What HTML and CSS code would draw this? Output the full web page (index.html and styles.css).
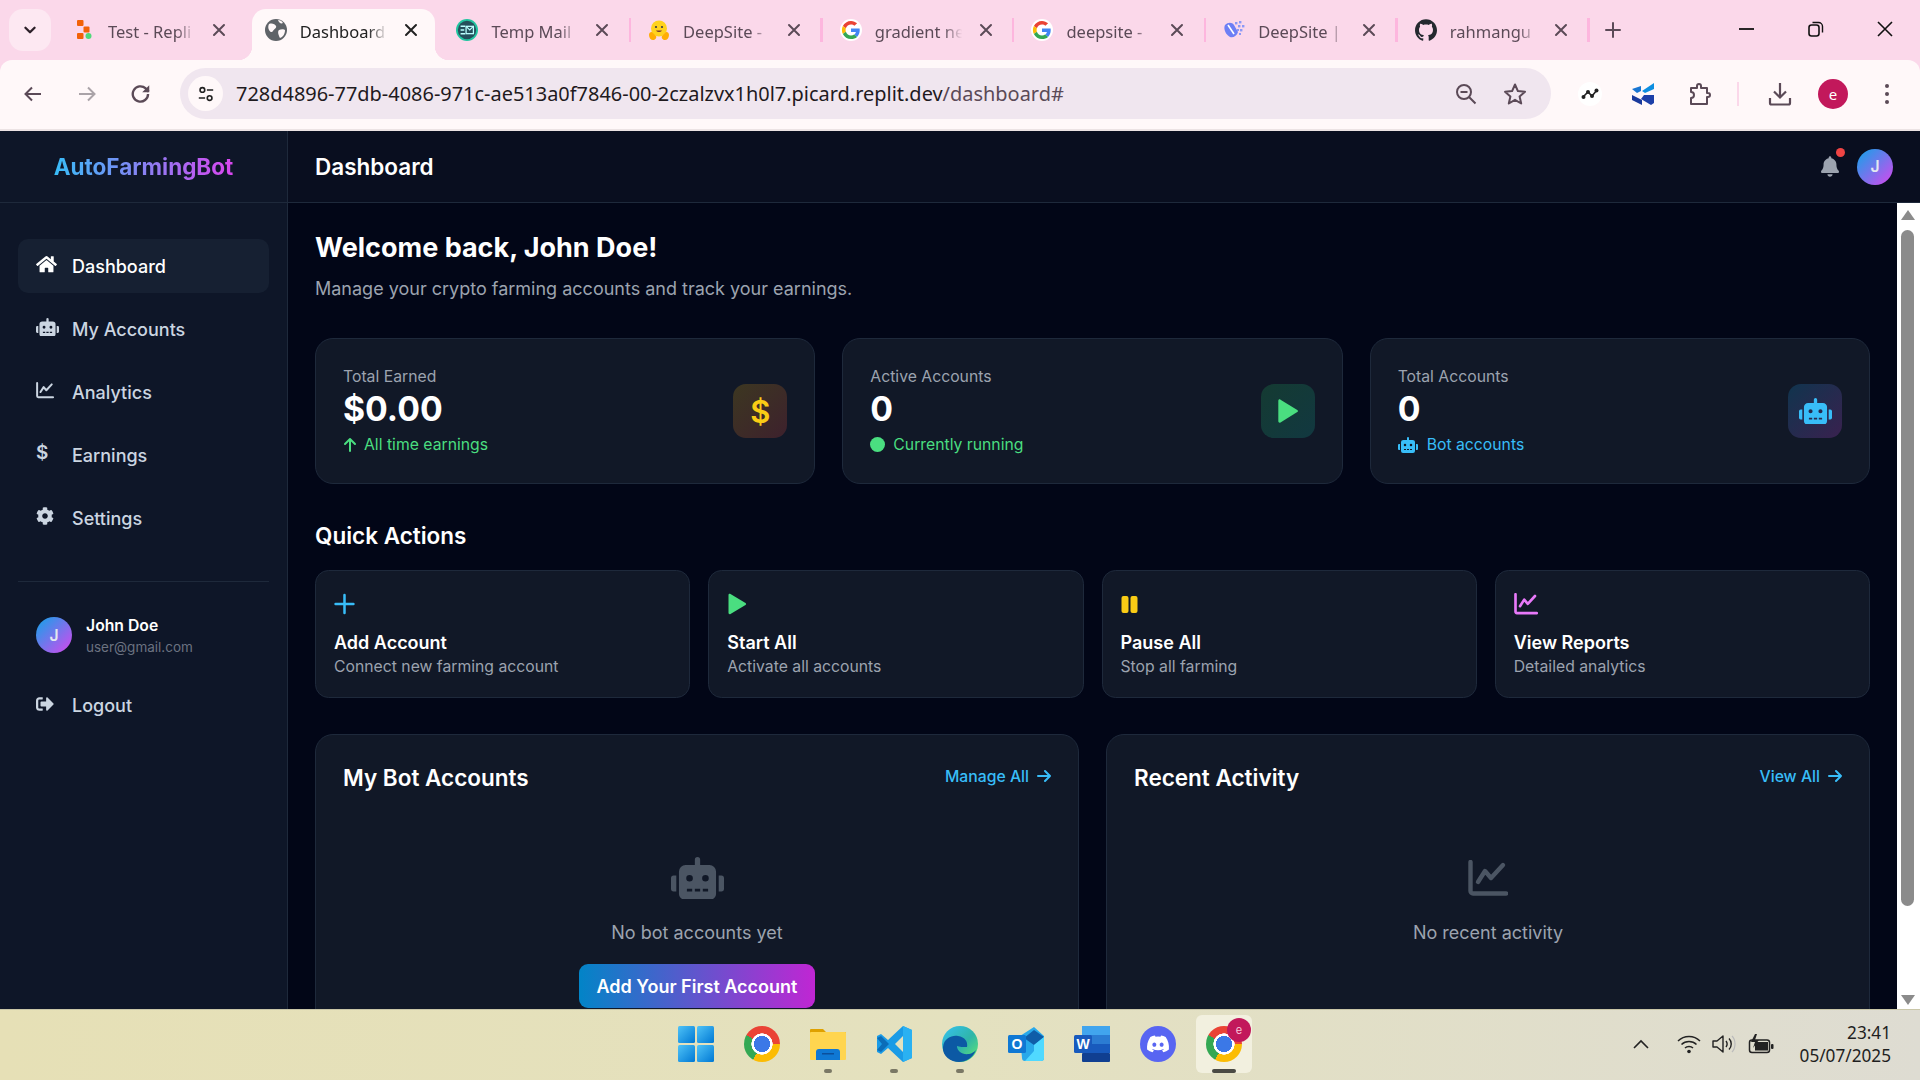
FILE: index.html
```html
<!DOCTYPE html>
<html lang="en">
<head>
  <meta charset="UTF-8">
  <meta name="viewport" content="width=device-width, initial-scale=1.0">
  <title>Dashboard</title>
  <link rel="stylesheet" href="styles.css">
</head>
<body>
  <svg class="defs">
    <defs>
      <path id="i-home" d="M280.37 148.26L96 300.11V464a16 16 0 0 0 16 16l112.06-.29a16 16 0 0 0 15.92-16V368a16 16 0 0 1 16-16h64a16 16 0 0 1 16 16v95.64a16 16 0 0 0 16 16.05L464 480a16 16 0 0 0 16-16V300L295.67 148.26a12.19 12.19 0 0 0-15.3 0zM571.6 251.47L488 182.56V44.05a12 12 0 0 0-12-12h-56a12 12 0 0 0-12 12v72.61L318.47 43a48 48 0 0 0-61 0L4.34 251.47a12 12 0 0 0-1.6 16.9l25.5 31A12 12 0 0 0 45.15 301l235.22-193.74a12.19 12.19 0 0 1 15.3 0L530.9 301a12 12 0 0 0 16.9-1.6l25.5-31a12 12 0 0 0-1.7-16.93z"/>
      <path id="i-robot" d="M32,224H64V416H32A31.96166,31.96166,0,0,1,0,384V256A31.96166,31.96166,0,0,1,32,224Zm512-48V448a64.06328,64.06328,0,0,1-64,64H160a64.06328,64.06328,0,0,1-64-64V176a79.974,79.974,0,0,1,80-80H288V32a32,32,0,0,1,64,0V96H464A79.974,79.974,0,0,1,544,176ZM264,256a40,40,0,1,0-40,40A39.997,39.997,0,0,0,264,256Zm-8,128H192v32h64Zm96,0H288v32h64ZM456,256a40,40,0,1,0-40,40A39.997,39.997,0,0,0,456,256Zm-8,128H384v32h64ZM640,256V384a31.96166,31.96166,0,0,1-32,32H576V224h32A31.96166,31.96166,0,0,1,640,256Z"/>
      <g id="i-chart" fill="none" stroke="currentColor" stroke-width="4.4" stroke-linecap="round" stroke-linejoin="round">
        <path d="M2.5 2v29a2.5 2.5 0 0 0 2.5 2.5h33"/>
        <path d="M10 22l7-11 6 7 12-13"/>
      </g>
      <path id="i-cog" d="M487.4 315.7l-42.6-24.6c4.3-23.2 4.3-47 0-70.2l42.6-24.6c4.9-2.8 7.1-8.6 5.5-14-11.1-35.6-30-67.8-54.7-94.6-3.8-4.1-10-5.1-14.8-2.3L380.8 110c-17.9-15.4-38.5-27.3-60.8-35.1V25.8c0-5.6-3.9-10.5-9.4-11.7-36.7-8.2-74.3-7.8-109.2 0-5.5 1.2-9.4 6.1-9.4 11.7V75c-22.2 7.9-42.8 19.8-60.8 35.1L88.7 85.5c-4.9-2.8-11-1.9-14.8 2.3-24.7 26.7-43.6 58.9-54.7 94.6-1.7 5.4.6 11.2 5.5 14L67.3 221c-4.3 23.2-4.3 47 0 70.2l-42.6 24.6c-4.9 2.8-7.1 8.6-5.5 14 11.1 35.6 30 67.8 54.7 94.6 3.8 4.1 10 5.1 14.8 2.3l42.6-24.6c17.9 15.4 38.5 27.3 60.8 35.1v49.2c0 5.6 3.9 10.5 9.4 11.7 36.7 8.2 74.3 7.8 109.2 0 5.5-1.2 9.4-6.1 9.4-11.7v-49.2c22.2-7.9 42.8-19.8 60.8-35.1l42.6 24.6c4.9 2.8 11 1.9 14.8-2.3 24.7-26.7 43.6-58.9 54.7-94.6 1.5-5.5-.7-11.3-5.6-14.1zM256 336c-44.1 0-80-35.9-80-80s35.9-80 80-80 80 35.9 80 80-35.9 80-80 80z"/>
      <path id="i-logout" d="M497 273L329 441c-15 15-41 4.5-41-17v-96H152c-13.3 0-24-10.7-24-24v-96c0-13.3 10.7-24 24-24h136V88c0-21.4 25.9-32 41-17l168 168c9.3 9.4 9.3 24.6 0 34zM192 436v-40c0-6.6-5.4-12-12-12H96c-17.7 0-32-14.3-32-32V160c0-17.7 14.3-32 32-32h84c6.6 0 12-5.4 12-12V76c0-6.6-5.4-12-12-12H96c-53 0-96 43-96 96v192c0 53 43 96 96 96h84c6.6 0 12-5.4 12-12z"/>
      <path id="i-bell" d="M224 512c35.32 0 63.97-28.65 63.97-64H160.03c0 35.35 28.65 64 63.97 64zm215.39-149.71c-19.32-20.76-55.47-51.99-55.47-154.29 0-77.7-54.48-139.9-127.94-155.16V32c0-17.67-14.32-32-31.98-32s-31.98 14.33-31.98 32v20.84C118.56 68.1 64.08 130.3 64.08 208c0 102.3-36.15 133.53-55.47 154.29-6 6.45-8.66 14.16-8.61 21.71.11 16.4 12.98 32 32.1 32h383.8c19.12 0 32-15.6 32.1-32 .05-7.55-2.61-15.27-8.61-21.71z"/>
      <path id="i-arrow" d="M2 8h12M9 3l5 5-5 5" fill="none" stroke="currentColor" stroke-width="2" stroke-linecap="round" stroke-linejoin="round"/>
      <path id="i-close" d="M2 2l10 10M12 2L2 12" fill="none" stroke="currentColor" stroke-width="2" stroke-linecap="round"/>
      <g id="i-google">
        <circle cx="24" cy="24" r="29" fill="#fff"/>
        <path fill="#EA4335" d="M24 9.5c3.54 0 6.71 1.22 9.21 3.6l6.85-6.85C35.9 2.38 30.47 0 24 0 14.62 0 6.51 5.38 2.56 13.22l7.98 6.19C12.43 13.72 17.74 9.5 24 9.5z"/>
        <path fill="#4285F4" d="M46.98 24.55c0-1.57-.15-3.09-.38-4.55H24v9.02h12.94c-.58 2.96-2.26 5.48-4.78 7.18l7.73 6c4.51-4.18 7.09-10.36 7.09-17.65z"/>
        <path fill="#FBBC05" d="M10.53 28.59c-.48-1.45-.76-2.99-.76-4.59s.27-3.14.76-4.59l-7.98-6.19C.92 16.46 0 20.12 0 24c0 3.88.92 7.54 2.56 10.78l7.97-6.19z"/>
        <path fill="#34A853" d="M24 48c6.48 0 11.93-2.13 15.89-5.81l-7.73-6c-2.15 1.45-4.92 2.3-8.16 2.3-6.26 0-11.57-4.22-13.47-9.91l-7.98 6.19C6.51 42.62 14.62 48 24 48z"/>
      </g>
      <linearGradient id="win-grad" x1="0" y1="0" x2="1" y2="1">
        <stop offset="0" stop-color="#4fc3f7"/>
        <stop offset="1" stop-color="#0078d4"/>
      </linearGradient>
      <linearGradient id="edge-grad" x1="0" y1="0" x2="1" y2="1">
        <stop offset="0" stop-color="#35c1f1"/>
        <stop offset="0.55" stop-color="#2fb5a8"/>
        <stop offset="1" stop-color="#66eb6e"/>
      </linearGradient>
    </defs>
  </svg>

  <!-- browser chrome -->
  <div class="tabstrip">
    <button class="tab-list">
      <svg viewBox="0 0 14 14" class="chev"><path d="M3 5l4 4 4-4" fill="none" stroke="currentColor" stroke-width="2" stroke-linecap="round" stroke-linejoin="round"/></svg>
    </button>
    <div class="tabs">
      <div class="tab no-sep">
        <svg class="favicon" viewBox="0 0 22 22">
          <rect x="4" y="1" width="6.5" height="6" rx="1" fill="#f26207"/>
          <rect x="10.5" y="7.5" width="6" height="6" rx="1" fill="#f26207"/>
          <rect x="4" y="14" width="6.5" height="6" rx="1" fill="#f26207"/>
          <circle cx="15.5" cy="17" r="3" fill="#4fd97a"/>
        </svg>
        <span class="tab-title">Test - Repli</span>
        <svg class="tab-close" viewBox="0 0 14 14"><use href="#i-close"/></svg>
      </div>
      <div class="tab active">
        <svg class="favicon" viewBox="0 0 22 22">
          <circle cx="11" cy="11" r="11" fill="#5f6368"/>
          <path d="M4 5c3-1 6 0 7 2s-2 3-3 5-3 1-4-1-1-4 0-6zM14 11c2-1 5-1 6 0 0 4-2 7-5 8-1-2-3-6-1-8zM13 1c2 0 4 1 5 3-2 1-4 0-5-3z" fill="#fff8f9"/>
        </svg>
        <span class="tab-title">Dashboard</span>
        <svg class="tab-close" viewBox="0 0 14 14"><use href="#i-close"/></svg>
      </div>
      <div class="tab">
        <svg class="favicon" viewBox="0 0 24 24">
          <circle cx="12" cy="12" r="12" fill="#20c5a0"/>
          <circle cx="12" cy="12" r="10" fill="#24505c"/>
          <path d="M5 8h5M5 12h4M5 16h5" stroke="#bff" stroke-width="1.6"/>
          <rect x="11" y="8" width="8" height="8" fill="none" stroke="#bff" stroke-width="1.4"/>
          <path d="M11 8l4 4 4-4" fill="none" stroke="#bff" stroke-width="1.2"/>
        </svg>
        <span class="tab-title">Temp Mail</span>
        <svg class="tab-close" viewBox="0 0 14 14"><use href="#i-close"/></svg>
      </div>
      <div class="tab">
        <svg class="favicon" viewBox="0 0 22 22">
          <circle cx="11" cy="9.5" r="8" fill="#ffd21e"/>
          <circle cx="8" cy="8" r="1.1" fill="#3a3b45"/>
          <circle cx="14" cy="8" r="1.1" fill="#3a3b45"/>
          <path d="M8 11.5c1.5 2 4.5 2 6 0z" fill="#7a3b2e"/>
          <path d="M1 16c0-3 3-4 4-2l3 3c1 2-1 4-3 4s-4-2-4-5zM21 16c0-3-3-4-4-2l-3 3c-1 2 1 4 3 4s4-2 4-5z" fill="#ffad03"/>
        </svg>
        <span class="tab-title">DeepSite -</span>
        <svg class="tab-close" viewBox="0 0 14 14"><use href="#i-close"/></svg>
      </div>
      <div class="tab">
        <svg class="favicon" viewBox="-5 -5 58 58"><use href="#i-google"/></svg>
        <span class="tab-title">gradient ne</span>
        <svg class="tab-close" viewBox="0 0 14 14"><use href="#i-close"/></svg>
      </div>
      <div class="tab">
        <svg class="favicon" viewBox="-5 -5 58 58"><use href="#i-google"/></svg>
        <span class="tab-title">deepsite -</span>
        <svg class="tab-close" viewBox="0 0 14 14"><use href="#i-close"/></svg>
      </div>
      <div class="tab">
        <svg class="favicon" viewBox="0 0 22 22">
          <path d="M2 6c3-3 7-3 9 0l4 7c-1 4-5 6-8 5-4-2-7-8-5-12z" fill="#6d7ff5"/>
          <path d="M5 6l6 9" stroke="#fff" stroke-width="1.6"/>
          <g fill="#8b99f7"><rect x="12" y="3" width="2.4" height="2.4"/><rect x="16" y="2" width="2.4" height="2.4"/><rect x="15" y="6" width="2.4" height="2.4"/><rect x="19" y="6" width="2.4" height="2.4"/><rect x="17" y="10" width="2.4" height="2.4"/><rect x="14" y="10" width="2" height="2"/><rect x="16" y="14" width="2" height="2"/></g>
        </svg>
        <span class="tab-title">DeepSite |</span>
        <svg class="tab-close" viewBox="0 0 14 14"><use href="#i-close"/></svg>
      </div>
      <div class="tab">
        <svg class="favicon" viewBox="0 0 24 24"><path fill="#24292f" d="M12 .297c-6.63 0-12 5.373-12 12 0 5.303 3.438 9.8 8.205 11.385.6.113.82-.258.82-.577 0-.285-.01-1.04-.015-2.04-3.338.724-4.042-1.61-4.042-1.61C4.422 18.07 3.633 17.7 3.633 17.7c-1.087-.744.084-.729.084-.729 1.205.084 1.838 1.236 1.838 1.236 1.07 1.835 2.809 1.305 3.495.998.108-.776.417-1.305.76-1.605-2.665-.3-5.466-1.332-5.466-5.93 0-1.31.465-2.38 1.235-3.22-.135-.303-.54-1.523.105-3.176 0 0 1.005-.322 3.3 1.23.96-.267 1.98-.399 3-.405 1.02.006 2.04.138 3 .405 2.28-1.552 3.285-1.23 3.285-1.23.645 1.653.24 2.873.12 3.176.765.84 1.23 1.91 1.23 3.22 0 4.61-2.805 5.625-5.475 5.92.42.36.81 1.096.81 2.22 0 1.606-.015 2.896-.015 3.286 0 .315.21.69.825.57C20.565 22.092 24 17.592 24 12.297c0-6.627-5.373-12-12-12"/></svg>
        <span class="tab-title">rahmangu</span>
        <svg class="tab-close" viewBox="0 0 14 14"><use href="#i-close"/></svg>
      </div>
    </div>
    <svg class="new-tab" viewBox="0 0 16 16"><path d="M8 1v14M1 8h14" stroke="currentColor" stroke-width="2" stroke-linecap="round"/></svg>
    <div class="win-controls">
      <svg viewBox="0 0 16 16"><path d="M0 8h15" stroke="#111" stroke-width="1.8"/></svg>
      <svg viewBox="0 0 16 16"><rect x="1" y="4" width="10" height="11" rx="2.5" fill="none" stroke="#111" stroke-width="1.6"/><path d="M4.5 1.5h6a4 4 0 0 1 4 4v6" fill="none" stroke="#111" stroke-width="1.4"/></svg>
      <svg viewBox="0 0 16 16"><path d="M1 1l14 14M15 1L1 15" stroke="#111" stroke-width="1.6"/></svg>
    </div>
  </div>

  <div class="toolbar">
    <button class="tool-btn">
      <svg viewBox="0 0 20 20"><path d="M18 10H3M9 3.5L2.5 10 9 16.5" fill="none" stroke="currentColor" stroke-width="2"/></svg>
    </button>
    <button class="tool-btn disabled">
      <svg viewBox="0 0 20 20"><path d="M2 10h15M11 3.5l6.5 6.5-6.5 6.5" fill="none" stroke="currentColor" stroke-width="2"/></svg>
    </button>
    <button class="tool-btn">
      <svg viewBox="2 1.5 17 17"><path d="M16.5 10a6.5 6.5 0 1 1-2-4.7L17 8" fill="none" stroke="currentColor" stroke-width="2"/><path d="M17.5 2.5V8.5H11.5z" fill="currentColor"/></svg>
    </button>
    <div class="omnibox">
      <span class="site-info">
        <svg viewBox="0 0 20 20"><circle cx="6" cy="5.5" r="2.6" fill="none" stroke="#222" stroke-width="1.8"/><path d="M11 5.5h7M2 14.5h7" stroke="#222" stroke-width="1.8"/><circle cx="14" cy="14.5" r="2.6" fill="none" stroke="#222" stroke-width="1.8"/></svg>
      </span>
      <span class="url">728d4896-77db-4086-971c-ae513a0f7846-00-2czalzvx1h0l7.picard.replit.dev<span class="url-path">/dashboard#</span></span>
      <svg class="omni-icon" viewBox="0 0 22 22"><circle cx="9" cy="9" r="7" fill="none" stroke="currentColor" stroke-width="2"/><path d="M5.5 9h7M14 14l6.5 6.5" stroke="currentColor" stroke-width="2"/></svg>
      <svg class="omni-icon star" viewBox="0 0 24 24"><path d="M12 2.5l2.9 6.6 7.1.7-5.4 4.7 1.6 7-6.2-3.7-6.2 3.7 1.6-7L2 9.8l7.1-.7z" fill="none" stroke="currentColor" stroke-width="2" stroke-linejoin="round"/></svg>
    </div>
    <span class="ext ext-a">
      <svg viewBox="0 0 24 24"><circle cx="12" cy="12" r="12" fill="#fff"/><path d="M5 15l5-5 4 4 5-6" fill="none" stroke="#222" stroke-width="1.6"/><circle cx="5.5" cy="15" r="2" fill="#222"/><circle cx="10" cy="10" r="2" fill="#222"/><circle cx="14" cy="14" r="2" fill="#222"/><circle cx="18.5" cy="8.5" r="2" fill="#222"/></svg>
    </span>
    <span class="ext ext-b">
      <svg viewBox="0 0 24 24"><path d="M1 7l9-3v5l-4 2z" fill="#1976d2"/><path d="M23 1v6l-9 4-3-2z" fill="#0d8ee0"/><path d="M1 13l10 5v5L1 18z" fill="#1a3a9c"/><path d="M13 13h10v8l-3 2-10-6z" fill="#1c3fa8"/></svg>
    </span>
    <span class="ext ext-c">
      <svg viewBox="0 0 24 24"><path d="M3 6h6V4a2 2 0 0 1 4 0v2h6v5h1a2 2 0 0 1 0 4h-1v7H3v-6a3 3 0 0 0 0-6z" fill="none" stroke="currentColor" stroke-width="2" stroke-linejoin="round"/></svg>
    </span>
    <span class="tool-divider"></span>
    <span class="ext ext-d">
      <svg viewBox="0 0 24 24"><path d="M12 1v14M6 9.5l6 6 6-6M2 16v5a1.5 1.5 0 0 0 1.5 1.5h17A1.5 1.5 0 0 0 22 21v-5" fill="none" stroke="currentColor" stroke-width="2.2"/></svg>
    </span>
    <span class="profile">e</span>
    <span class="kebab"><i></i><i></i><i></i></span>
  </div>

  <!-- app -->
  <div class="app">
    <aside class="sidebar">
      <div class="logo-row"><span class="logo">AutoFarmingBot</span></div>
      <nav class="nav">
        <a class="nav-item active"><span class="nav-icon"><svg class="ic-home" viewBox="0 0 576 512"><use href="#i-home"/></svg></span>Dashboard</a>
        <a class="nav-item"><span class="nav-icon"><svg class="ic-robot" viewBox="0 0 640 512"><use href="#i-robot"/></svg></span>My Accounts</a>
        <a class="nav-item"><span class="nav-icon"><svg class="ic-chart" viewBox="0 0 40 36"><use href="#i-chart"/></svg></span>Analytics</a>
        <a class="nav-item"><span class="nav-icon dollar">$</span>Earnings</a>
        <a class="nav-item"><span class="nav-icon"><svg class="ic-cog" viewBox="0 0 512 512"><use href="#i-cog"/></svg></span>Settings</a>
      </nav>
      <div class="side-foot">
        <div class="user-row">
          <span class="avatar">J</span>
          <div class="user-text">
            <div class="user-name">John Doe</div>
            <div class="user-mail">user@gmail.com</div>
          </div>
        </div>
        <a class="nav-item"><span class="nav-icon"><svg class="ic-cog" viewBox="0 0 512 512"><use href="#i-logout"/></svg></span>Logout</a>
      </div>
    </aside>

    <div class="main">
      <header class="topbar">
        <h1>Dashboard</h1>
        <div class="topbar-right">
          <span class="bell">
            <svg viewBox="0 0 448 512"><use href="#i-bell"/></svg>
            <i class="bell-dot"></i>
          </span>
          <span class="avatar">J</span>
        </div>
      </header>

      <div class="page-wrap">
        <main class="content">
          <h2 class="welcome">Welcome back, John Doe!</h2>
          <p class="welcome-sub">Manage your crypto farming accounts and track your earnings.</p>

          <section class="stats">
            <div class="card stat">
              <div>
                <div class="stat-label">Total Earned</div>
                <div class="stat-value">$0.00</div>
                <div class="stat-note green">
                  <svg class="note-arrow" viewBox="1 0 14 16"><path d="M8 14V2M3 7l5-5 5 5" fill="none" stroke="currentColor" stroke-width="2" stroke-linecap="round" stroke-linejoin="round"/></svg>
                  All time earnings
                </div>
              </div>
              <div class="stat-icon amber">$</div>
            </div>
            <div class="card stat">
              <div>
                <div class="stat-label">Active Accounts</div>
                <div class="stat-value">0</div>
                <div class="stat-note green"><i class="note-dot"></i>Currently running</div>
              </div>
              <div class="stat-icon lime">
                <svg class="ic-play-lg" viewBox="0 0 22 24"><path d="M3 2.5v19c0 1 1 1.6 2 1l15.5-9.5c.8-.5.8-1.5 0-2L5 1.5c-1-.6-2 0-2 1z"/></svg>
              </div>
            </div>
            <div class="card stat">
              <div>
                <div class="stat-label">Total Accounts</div>
                <div class="stat-value">0</div>
                <div class="stat-note sky"><svg class="note-robot" viewBox="0 0 640 512"><use href="#i-robot"/></svg>Bot accounts</div>
              </div>
              <div class="stat-icon blue">
                <svg class="ic-robot-lg" viewBox="0 0 640 512"><use href="#i-robot"/></svg>
              </div>
            </div>
          </section>

          <h3 class="section-title">Quick Actions</h3>
          <section class="actions">
            <div class="card action">
              <div class="action-icon sky"><svg viewBox="0 0 20 20"><path d="M10 1.5v17M1.5 10h17" stroke="currentColor" stroke-width="2.4" stroke-linecap="round"/></svg></div>
              <div class="action-title">Add Account</div>
              <div class="action-sub">Connect new farming account</div>
            </div>
            <div class="card action">
              <div class="action-icon green"><svg viewBox="0 0 20 22"><path d="M1 2v18c0 1 1 1.5 2 1l15-9c.8-.5.8-1.5 0-2L3 1c-1-.6-2 0-2 1z" fill="currentColor"/></svg></div>
              <div class="action-title">Start All</div>
              <div class="action-sub">Activate all accounts</div>
            </div>
            <div class="card action">
              <div class="action-icon amber-text"><svg viewBox="0 0 20 22"><rect x="0" y="3" width="7" height="17" rx="2" fill="currentColor"/><rect x="9" y="3" width="7" height="17" rx="2" fill="currentColor"/></svg></div>
              <div class="action-title">Pause All</div>
              <div class="action-sub">Stop all farming</div>
            </div>
            <div class="card action">
              <div class="action-icon pink"><svg class="ic-report" viewBox="0 0 40 36"><use href="#i-chart"/></svg></div>
              <div class="action-title">View Reports</div>
              <div class="action-sub">Detailed analytics</div>
            </div>
          </section>

          <section class="panels">
            <div class="card panel">
              <div class="panel-head">
                <h3>My Bot Accounts</h3>
                <a class="panel-link">Manage All <svg viewBox="1 0 14 16"><use href="#i-arrow"/></svg></a>
              </div>
              <div class="empty">
                <svg class="empty-robot" viewBox="0 0 640 512"><use href="#i-robot"/></svg>
                <p>No bot accounts yet</p>
                <button class="btn-primary">Add Your First Account</button>
              </div>
            </div>
            <div class="card panel">
              <div class="panel-head">
                <h3>Recent Activity</h3>
                <a class="panel-link">View All <svg viewBox="1 0 14 16"><use href="#i-arrow"/></svg></a>
              </div>
              <div class="empty">
                <svg class="empty-chart" viewBox="0 0 40 36"><use href="#i-chart"/></svg>
                <p>No recent activity</p>
              </div>
            </div>
          </section>
        </main>

        <div class="scrollbar">
          <span class="arrow-up"></span>
          <span class="thumb"></span>
          <span class="arrow-down"></span>
        </div>
      </div>
    </div>
  </div>

  <!-- windows taskbar -->
  <footer class="taskbar">
    <div></div>
    <div class="task-icons">
      <span class="task-app">
        <svg viewBox="0 0 36 36"><rect x="0" y="0" width="17" height="17" rx="1.5" fill="url(#win-grad)"/><rect x="19" y="0" width="17" height="17" rx="1.5" fill="url(#win-grad)"/><rect x="0" y="19" width="17" height="17" rx="1.5" fill="url(#win-grad)"/><rect x="19" y="19" width="17" height="17" rx="1.5" fill="url(#win-grad)"/></svg>
      </span>
      <span class="task-app"><span class="chrome-logo"></span></span>
      <span class="task-app running">
        <svg viewBox="0 0 36 36"><path d="M0 4a1 1 0 0 1 1-1h12l3 3h19a1 1 0 0 1 1 1v5H0z" fill="#dfa100"/><rect x="0" y="6" width="36" height="28" rx="1" fill="#ffd54f"/><path d="M6 34v-8a3 3 0 0 1 3-3h18a3 3 0 0 1 3 3v8z" fill="#0f78d4"/><rect x="12" y="27" width="12" height="1.5" fill="#0b4f9c"/></svg>
      </span>
      <span class="task-app running">
        <svg viewBox="0 0 36 36"><path d="M27 0l9 4v28l-9 4-15-14-7 6-4-2V10l4-2 7 6zM27 10l-8 8 8 8z" fill="#1a9be6"/><path d="M27 0l9 4v28l-9 4z" fill="#2ab1f2"/><path d="M1 12l4-2 8 8-8 8-4-2 5-6z" fill="#0b6db8"/></svg>
      </span>
      <span class="task-app running">
        <svg viewBox="0 0 36 36"><circle cx="18" cy="18" r="18" fill="url(#edge-grad)"/><path d="M1 21C2 12 10 9 16 10c7 1 10 6 9 11-3 0-8 0-10-1 0 5 5 9 12 8 3-.5 5-2 7-4-3 8-10 12-17 12C9 36 0 30 1 21z" fill="#0c59a4"/></svg>
      </span>
      <span class="task-app">
        <svg viewBox="0 0 36 36"><path d="M12 10L26 1l10 9v22a3 3 0 0 1-3 3H17a3 3 0 0 1-3-3z" fill="#28a8ea"/><path d="M16 12L26 4l10 7-10 8z" fill="#0f5da8"/><path d="M26 19l10-8v21a3 3 0 0 1-3 3H17l9-10z" fill="#50d9ff"/><rect x="0" y="9" width="18" height="18" rx="1.5" fill="#0f78d4"/><text x="9" y="23" class="logo-letter">O</text></svg>
      </span>
      <span class="task-app">
        <svg viewBox="0 0 36 36"><rect x="8" y="0" width="28" height="9" fill="#41a5ee"/><rect x="8" y="9" width="28" height="9" fill="#2b7cd3"/><rect x="8" y="18" width="28" height="9" fill="#185abd"/><rect x="8" y="27" width="28" height="9" rx="1" fill="#103f91"/><rect x="0" y="9" width="18" height="18" rx="1.5" fill="#185abd"/><text x="9" y="23" class="logo-letter">W</text></svg>
      </span>
      <span class="task-app">
        <svg viewBox="0 0 36 36"><circle cx="18" cy="18" r="18" fill="#5865f2"/><g transform="translate(7 9.5) scale(0.173)"><path fill="#fff" d="M107.7,8.07A105.15,105.15,0,0,0,81.47,0a72.06,72.06,0,0,0-3.36,6.83A97.68,97.68,0,0,0,49,6.83,72.37,72.37,0,0,0,45.64,0,105.89,105.89,0,0,0,19.39,8.09C2.79,32.65-1.71,56.6.54,80.21h0A105.73,105.73,0,0,0,32.71,96.36,77.7,77.7,0,0,0,39.6,85.25a68.42,68.42,0,0,1-10.85-5.18c.91-.66,1.8-1.34,2.66-2a75.57,75.57,0,0,0,64.32,0c.87.71,1.76,1.39,2.66,2a68.68,68.68,0,0,1-10.87,5.19,77,77,0,0,0,6.89,11.1A105.25,105.25,0,0,0,126.6,80.22h0C129.24,52.84,122.09,29.11,107.7,8.07ZM42.45,65.69C36.18,65.69,31,60,31,53s5-12.74,11.43-12.74S54,46,53.89,53,48.84,65.69,42.45,65.69Zm42.24,0C78.41,65.69,73.25,60,73.25,53s5-12.74,11.44-12.74S96.23,46,96.12,53,91.08,65.69,84.69,65.69Z"/></g></svg>
      </span>
      <span class="task-app current">
        <span class="chrome-logo"></span>
        <span class="task-badge">e</span>
      </span>
    </div>
    <div class="tray">
      <svg class="tray-chev" viewBox="0 0 16 10"><path d="M1 9l7-7 7 7" fill="none" stroke="#222" stroke-width="1.6"/></svg>
      <svg class="tray-wifi" viewBox="0 0 24 20"><path d="M1 7c6-6 16-6 22 0M4.5 10.5c4-4 11-4 15 0M8 14c2-2 6-2 8 0" fill="none" stroke="#222" stroke-width="1.5"/><circle cx="12" cy="17.5" r="1.8" fill="#222"/></svg>
      <svg class="tray-vol" viewBox="0 0 24 20"><path d="M1 7v6h4l6 5V2L5 7z" fill="none" stroke="#222" stroke-width="1.4" stroke-linejoin="round"/><path d="M14 7c1.5 2 1.5 4 0 6M17 4.5c3 3 3 8 0 11" fill="none" stroke="#222" stroke-width="1.4"/><path d="M20 2c4 4 4 12 0 16" fill="none" stroke="#bbb" stroke-width="1.2"/></svg>
      <svg class="tray-bat" viewBox="0 0 26 20"><rect x="1.5" y="6" width="20" height="12.5" rx="2.5" fill="none" stroke="#222" stroke-width="1.5"/><rect x="7" y="8" width="13" height="8.5" fill="#222"/><rect x="23" y="10" width="2.5" height="5" rx="1" fill="#222"/><path d="M7 0L3 8h4l-2 6 6-8H7l2-6z" fill="#222"/></svg>
      <div class="clock"><div>23:41</div><div>05/07/2025</div></div>
    </div>
  </footer>
</body>
</html>
```

FILE: styles.css
```css
* {
  box-sizing: border-box;
}

html,
body {
  margin: 0;
  height: 100%;
  overflow: hidden;
}

body {
  display: flex;
  flex-direction: column;
  width: 1920px;
  height: 1080px;
  font-family: Inter, "Liberation Sans", sans-serif;
  background: #fbd8ea;
}

button {
  border: none;
  background: none;
  padding: 0;
}

h1,
h2,
h3,
p {
  margin: 0;
}

svg {
  display: block;
  fill: currentColor;
}

.defs {
  position: absolute;
  width: 0;
  height: 0;
}

/* browser tabs */
.tabstrip {
  display: flex;
  align-items: flex-start;
  height: 60px;
  flex-shrink: 0;
  padding-top: 9px;
  padding-left: 9px;
  font-family: "Noto Sans", sans-serif;
  color: #5b4a57;
}

.tab-list {
  width: 42px;
  height: 42px;
  border-radius: 14px;
  background: #fde8f2;
  display: flex;
  align-items: center;
  justify-content: center;
  color: #2c2029;
}

.chev {
  width: 16px;
  height: 16px;
}

.tabs {
  display: flex;
  margin-left: 5px;
}

.tab {
  position: relative;
  display: flex;
  align-items: center;
  width: 191.7px;
  height: 51px;
  padding: 0 16.7px 9px 17px;
}

.tab::after {
  content: "";
  position: absolute;
  right: 0;
  top: 9px;
  width: 2.5px;
  height: 24px;
  background: #fdb6de;
}

.tab.no-sep::after,
.tab.active::after {
  display: none;
}

.tab.active {
  width: 183.7px;
  margin: 0 4px;
  padding: 0 12.7px 9px 13px;
  background: #fff8f9;
  border-radius: 14px 14px 0 0;
  color: #222;
}

.tab.active::before {
  content: "";
  position: absolute;
  left: -14px;
  right: -14px;
  bottom: 0;
  height: 14px;
  z-index: -1;
  background:
    radial-gradient(circle at 0 0, #fbd8ea 14px, #fff8f9 14.5px) left / 14px 14px no-repeat,
    radial-gradient(circle at 100% 0, #fbd8ea 14px, #fff8f9 14.5px) right / 14px 14px no-repeat;
}

.favicon {
  width: 22px;
  height: 22px;
  flex-shrink: 0;
}

.tab-title {
  width: 92px;
  margin: 3px 0 0 13px;
  flex-shrink: 0;
  overflow: hidden;
  white-space: nowrap;
  font-size: 16.5px;
  -webkit-mask-image: linear-gradient(90deg, #000 74%, transparent 95%);
  mask-image: linear-gradient(90deg, #000 74%, transparent 95%);
}

.tab-close {
  width: 14px;
  height: 14px;
  margin-left: 12px;
}

.new-tab {
  width: 16px;
  height: 16px;
  margin: 13px 0 0 15px;
}

.win-controls {
  display: flex;
  gap: 53px;
  margin: 12px 0 0 auto;
  padding-right: 27px;
}

.win-controls svg {
  width: 16px;
  height: 16px;
}

/* toolbar */
.toolbar {
  display: flex;
  align-items: center;
  height: 71px;
  flex-shrink: 0;
  padding: 0 0 2px 11px;
  background: #fff8f9;
  border-radius: 12px 12px 0 0;
  border-bottom: 2px solid #ece3e4;
  color: #5b4a57;
  font-family: "Noto Sans", sans-serif;
}

.tool-btn {
  width: 44px;
  height: 44px;
  margin-right: 10px;
  display: flex;
  align-items: center;
  justify-content: center;
  color: #5b4a57;
}

.tool-btn svg {
  width: 20px;
  height: 20px;
}

.tool-btn.disabled {
  color: #aaa3a8;
}

.omnibox {
  display: flex;
  align-items: center;
  width: 1371px;
  height: 51px;
  margin-left: 7px;
  padding: 0 24px 0 8px;
  background: #f0e6ef;
  border-radius: 26px;
}

.site-info {
  width: 35px;
  height: 35px;
  border-radius: 50%;
  background: #fff8f9;
  display: flex;
  align-items: center;
  justify-content: center;
  flex-shrink: 0;
}

.site-info svg {
  width: 18px;
  height: 18px;
}

.url {
  flex: 1;
  margin-left: 13px;
  font-size: 19.95px;
  color: #1f1a1e;
  white-space: nowrap;
}

.url-path {
  color: #5b4a57;
}

.omni-icon {
  width: 22px;
  height: 22px;
  margin-right: 26px;
}

.omni-icon.star {
  width: 24px;
  height: 24px;
  margin-right: 0;
}

.ext {
  width: 24px;
  height: 24px;
  flex-shrink: 0;
}

.ext-a {
  margin-left: 27px;
}

.ext-b {
  margin-left: 29px;
}

.ext-c {
  margin-left: 33px;
}

.tool-divider {
  width: 2px;
  height: 24px;
  margin-left: 25px;
  background: #fbd8ea;
}

.ext-d {
  margin-left: 29px;
}

.profile {
  width: 30px;
  height: 30px;
  margin-left: 26px;
  border-radius: 50%;
  background: #c2185b;
  color: #fff;
  font-size: 15px;
  display: flex;
  align-items: center;
  justify-content: center;
}

.kebab {
  display: flex;
  flex-direction: column;
  gap: 4px;
  margin-left: 37px;
}

.kebab i {
  width: 4px;
  height: 4px;
  border-radius: 50%;
  background: #5b4a57;
}

/* app layout */
.app {
  display: flex;
  flex: 1;
  min-height: 0;
  background: #020617;
  color: #fff;
  overflow: hidden;
}

.sidebar {
  width: 288px;
  flex-shrink: 0;
  background: #0e1628;
  border-right: 1px solid #1e293b;
}

.logo-row {
  height: 72px;
  display: flex;
  align-items: center;
  justify-content: center;
  border-bottom: 1px solid #1e293b;
}

.logo {
  font-size: 22.5px;
  font-weight: 700;
  background: linear-gradient(90deg, #38bdf8, #d946ef);
  -webkit-background-clip: text;
  background-clip: text;
  color: transparent;
}

.nav {
  display: flex;
  flex-direction: column;
  gap: 9.5px;
  padding: 36px 18px 0;
}

.nav-item {
  display: flex;
  align-items: center;
  height: 53.5px;
  padding: 1px 0 0 18px;
  border-radius: 10px;
  font-size: 18px;
  font-weight: 500;
  color: #cbd5e1;
}

.nav-item.active {
  background: #162032;
  color: #fff;
}

.nav-icon {
  width: 36px;
  flex-shrink: 0;
  margin-top: -4px;
}

.nav-icon.dollar {
  font-size: 19px;
  font-weight: 600;
  line-height: 20px;
}

.ic-home {
  width: 21px;
  height: 18.5px;
}

.ic-robot {
  width: 23px;
  height: 18.4px;
}

.ic-chart {
  width: 18px;
  height: 16.5px;
}

.ic-cog {
  width: 18px;
  height: 18px;
}

.side-foot {
  margin: 36px 18px 0;
  border-top: 1px solid #1e293b;
}

.side-foot .nav-item {
  margin-top: 22px;
}

.user-row {
  display: flex;
  align-items: center;
  gap: 14px;
  margin-top: 32px;
  padding-left: 18px;
}

.user-text {
  padding-top: 2px;
}

.avatar {
  width: 36px;
  height: 36px;
  border-radius: 50%;
  flex-shrink: 0;
  background: linear-gradient(135deg, #0ea5e9, #d946ef);
  display: flex;
  align-items: center;
  justify-content: center;
  font-size: 15.75px;
  font-weight: 600;
  color: #e2e8f0;
}

.user-name {
  font-size: 15.75px;
  font-weight: 600;
  line-height: 20px;
}

.user-mail {
  font-size: 13.5px;
  line-height: 20px;
  margin-top: 1px;
  color: #6b7280;
}

.main {
  flex: 1;
  display: flex;
  flex-direction: column;
  min-width: 0;
}

.topbar {
  height: 72px;
  flex-shrink: 0;
  display: flex;
  align-items: center;
  justify-content: space-between;
  padding: 0 27px;
  background: #090e1f;
  border-bottom: 1px solid #1e293b;
}

.topbar h1 {
  font-size: 22.5px;
  font-weight: 600;
}

.topbar-right {
  display: flex;
  align-items: center;
  gap: 18px;
}

.bell {
  position: relative;
  color: #9ca3af;
}

.bell svg {
  width: 18px;
  height: 21px;
}

.bell-dot {
  position: absolute;
  top: -8px;
  right: -6px;
  width: 9px;
  height: 9px;
  border-radius: 50%;
  background: #ef4444;
}

.page-wrap {
  flex: 1;
  display: flex;
  min-height: 0;
}

.content {
  flex: 1;
  min-width: 0;
  padding: 29px 27px 0;
  overflow: hidden;
}

.welcome {
  font-size: 27px;
  font-weight: 700;
  line-height: 32px;
}

.welcome-sub {
  margin-top: 11px;
  font-size: 18px;
  line-height: 27px;
  color: #9ca3af;
}

.card {
  background: #111827;
  border: 1px solid #1e293b;
  border-radius: 18px;
}

.stats {
  display: grid;
  grid-template-columns: repeat(3, 1fr);
  gap: 27px;
  margin-top: 36px;
}

.stat {
  display: flex;
  align-items: center;
  justify-content: space-between;
  padding: 27px;
}

.stat-label {
  font-size: 15.75px;
  line-height: 22.5px;
  color: #9ca3af;
}

.stat-value {
  font-size: 33.75px;
  font-weight: 700;
  line-height: 40.5px;
}

.stat-note {
  display: flex;
  align-items: center;
  margin-top: 4.5px;
  font-size: 15.75px;
  line-height: 22.5px;
}

.green {
  color: #4ade80;
}

.sky {
  color: #38bdf8;
}

.amber-text {
  color: #facc15;
}

.pink {
  color: #e879f9;
}

.note-arrow {
  width: 14px;
  height: 16px;
  margin-right: 7px;
}

.note-dot {
  width: 15px;
  height: 15px;
  border-radius: 50%;
  background: #4ade80;
  margin-right: 8px;
}

.note-robot {
  width: 20px;
  height: 16px;
  margin-right: 9px;
}

.stat-icon {
  width: 54px;
  height: 54px;
  border-radius: 13px;
  display: flex;
  align-items: center;
  justify-content: center;
  flex-shrink: 0;
}

.stat-icon.amber {
  background: linear-gradient(135deg, rgba(234, 179, 8, 0.2), rgba(239, 68, 68, 0.2));
  color: #facc15;
  font-size: 31px;
  font-weight: 600;
}

.stat-icon.lime {
  background: linear-gradient(135deg, rgba(34, 197, 94, 0.2), rgba(20, 184, 166, 0.2));
  color: #4ade80;
}

.stat-icon.blue {
  background: linear-gradient(135deg, rgba(14, 165, 233, 0.2), rgba(217, 70, 239, 0.2));
  color: #38bdf8;
}

.ic-play-lg {
  width: 24px;
  height: 26px;
  margin-left: -2px;
}

.ic-robot-lg {
  width: 33px;
  height: 26.4px;
}

.section-title {
  margin-top: 37px;
  font-size: 22.5px;
  font-weight: 600;
  line-height: 30px;
}

.actions {
  display: grid;
  grid-template-columns: repeat(4, 1fr);
  gap: 18px;
  margin-top: 19px;
}

.action {
  height: 128px;
  padding: 22px 18px 0;
  border-radius: 13.5px;
}

.action-icon {
  height: 22px;
}

.action-icon svg {
  width: 21px;
  height: 22px;
}

.action-icon .ic-report {
  width: 24px;
  height: 21.6px;
}

.action-title {
  margin-top: 15px;
  font-size: 18px;
  font-weight: 600;
  line-height: 25px;
}

.action-sub {
  margin-top: 1px;
  font-size: 15.75px;
  line-height: 21px;
  color: #9ca3af;
}

.panels {
  display: grid;
  grid-template-columns: 1fr 1fr;
  gap: 27px;
  margin-top: 36px;
}

.panel {
  height: 420px;
  padding: 28px 27px;
}

.panel-head {
  display: flex;
  align-items: center;
  justify-content: space-between;
}

.panel-head h3 {
  font-size: 22.5px;
  font-weight: 600;
  line-height: 30px;
}

.panel-link {
  display: flex;
  align-items: center;
  gap: 8px;
  margin-top: -4px;
  font-size: 15.75px;
  font-weight: 500;
  color: #38bdf8;
}

.panel-link svg {
  width: 14px;
  height: 16px;
}

.empty {
  display: flex;
  flex-direction: column;
  align-items: center;
  margin-top: 64px;
  color: #9ca3af;
}

.empty-robot {
  width: 53px;
  height: 42.4px;
  color: #4b5563;
}

.empty-chart {
  width: 40px;
  height: 36px;
  margin-top: 3px;
  margin-bottom: 3px;
  color: #4b5563;
}

.empty p {
  margin-top: 20px;
  font-size: 18px;
  line-height: 27px;
}

.btn-primary {
  width: 236px;
  height: 44px;
  margin-top: 18px;
  border-radius: 9px;
  background: linear-gradient(90deg, #0284c7, #c026d3);
  color: #fff;
  font-family: inherit;
  font-size: 18px;
  font-weight: 600;
}

/* fake windows scrollbar */
.scrollbar {
  width: 23px;
  flex-shrink: 0;
  background: #fff;
  display: flex;
  flex-direction: column;
  align-items: center;
  padding: 7px 2px 4px 0;
}

.arrow-up,
.arrow-down {
  width: 0;
  height: 0;
  border-left: 7px solid transparent;
  border-right: 7px solid transparent;
  flex-shrink: 0;
}

.arrow-up {
  border-bottom: 10px solid #8b8b8b;
}

.arrow-down {
  border-top: 10px solid #8b8b8b;
  margin-top: auto;
}

.thumb {
  width: 13px;
  height: 676px;
  margin-top: 10px;
  border-radius: 7px;
  background: #8b8b8b;
  flex-shrink: 0;
}

/* taskbar */
.taskbar {
  display: grid;
  grid-template-columns: 1fr auto 1fr;
  align-items: center;
  height: 71px;
  flex-shrink: 0;
  padding-bottom: 2px;
  background: linear-gradient(90deg, #e6e0b6, #e4e1bf 50%, #dedcd2);
  border-top: 1px solid #c9c6a8;
}

.task-icons {
  display: flex;
  align-items: center;
  gap: 10px;
}

.task-app {
  position: relative;
  width: 56px;
  height: 58px;
  display: flex;
  align-items: center;
  justify-content: center;
  border-radius: 6px;
}

.task-app > svg {
  width: 36px;
  height: 36px;
}

.task-app.running::after,
.task-app.current::after {
  content: "";
  position: absolute;
  bottom: 0;
  left: 24px;
  width: 8px;
  height: 4px;
  border-radius: 2px;
  background: #7a7865;
}

.task-app.current {
  background: #f2f0df;
}

.task-app.current::after {
  left: 16px;
  width: 24px;
  background: #4a4a44;
}

.chrome-logo {
  width: 36px;
  height: 36px;
  border-radius: 50%;
  background:
    radial-gradient(circle closest-side, #3b78e7 0 44%, #fff 46% 58%, transparent 60%),
    conic-gradient(#ea4335 0 90deg, #fbbc04 90deg 210deg, #34a853 210deg 300deg, #ea4335 300deg);
}

.task-badge {
  position: absolute;
  top: 3px;
  right: 1px;
  width: 24px;
  height: 24px;
  border-radius: 50%;
  background: #c2185b;
  color: #f7c6d9;
  font-size: 11px;
  display: flex;
  align-items: center;
  justify-content: center;
}

.logo-letter {
  font-family: "Liberation Sans", sans-serif;
  font-size: 14px;
  font-weight: 700;
  fill: #fff;
  text-anchor: middle;
}

.tray {
  display: flex;
  align-items: center;
  justify-content: flex-end;
  padding-right: 29px;
  color: #1f1f1f;
}

.tray-chev {
  width: 16px;
  height: 10px;
  margin-right: 28px;
}

.tray-wifi {
  width: 24px;
  height: 20px;
  margin-right: 11px;
}

.tray-vol {
  width: 24px;
  height: 20px;
  margin-right: 12px;
}

.tray-bat {
  width: 26px;
  height: 20px;
  margin-right: 26px;
}

.clock {
  font-family: "Noto Sans", sans-serif;
  font-size: 17.2px;
  line-height: 23px;
  text-align: right;
}
```
